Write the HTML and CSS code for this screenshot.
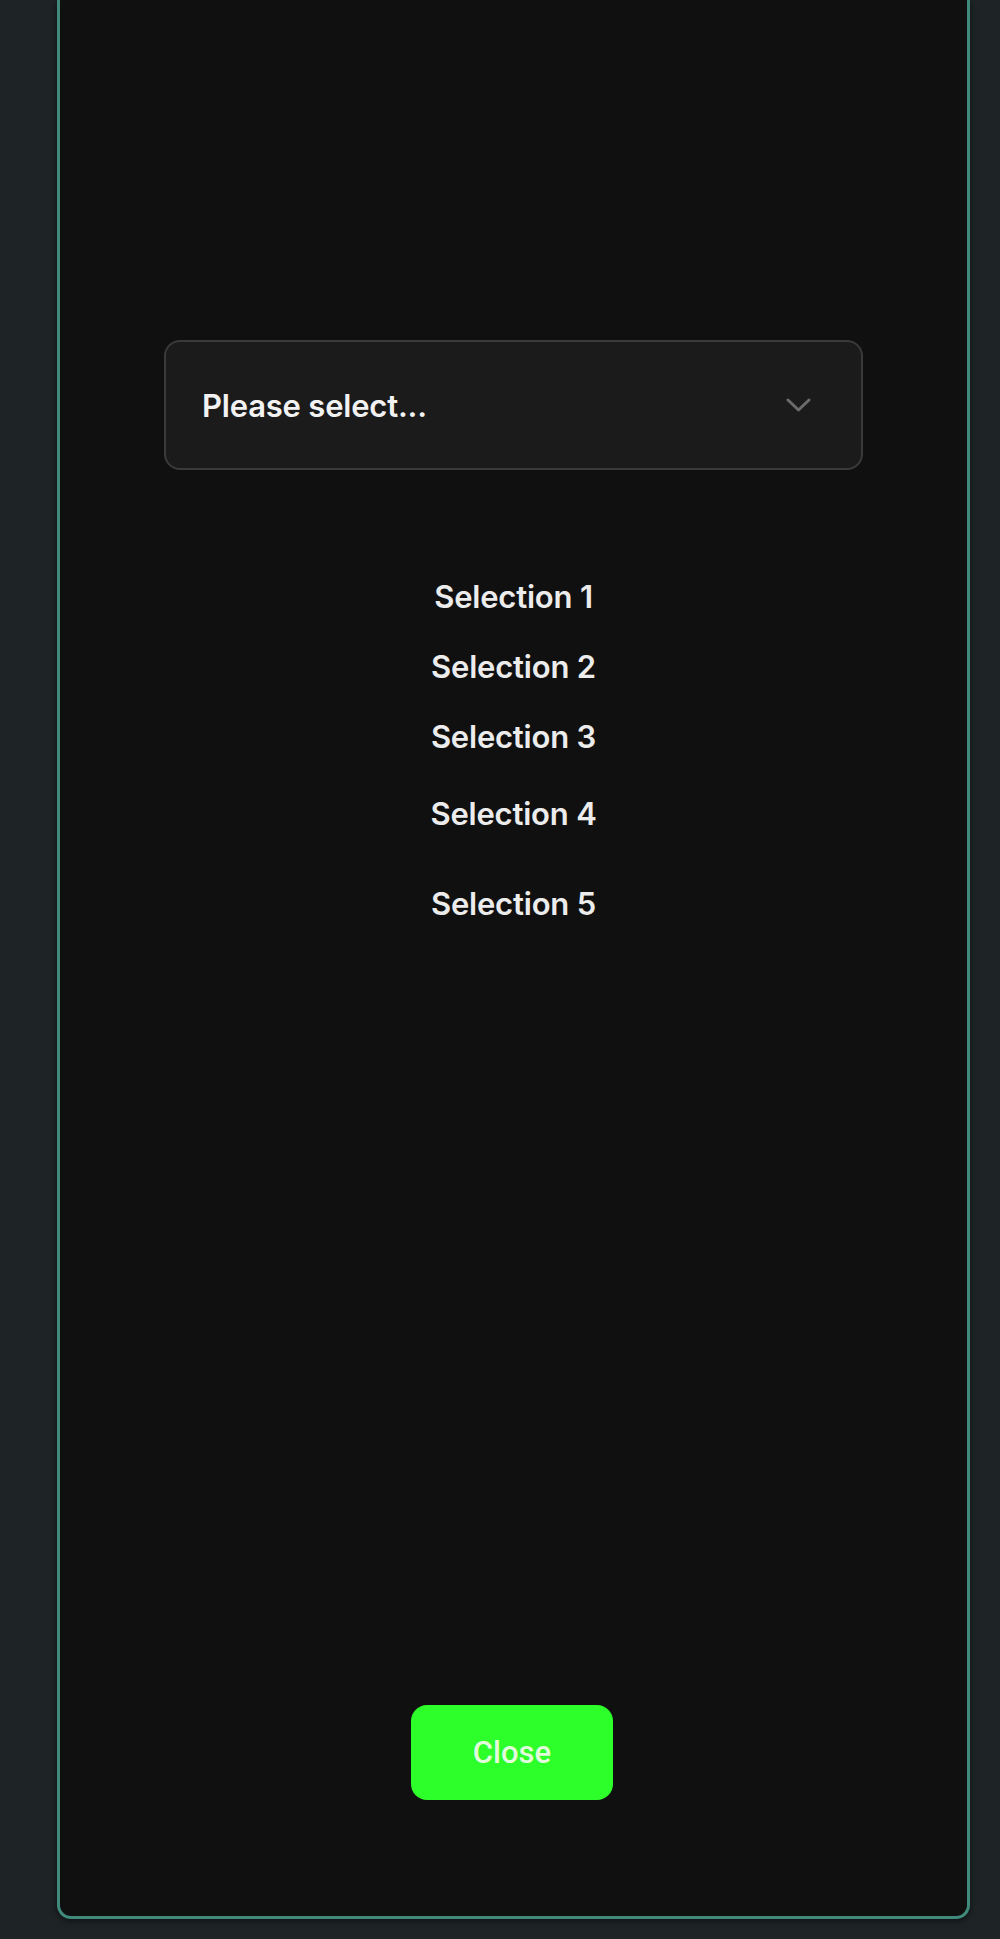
FILE: index.html
```html
<!DOCTYPE html>
<html lang="en">
<head>
    <meta charset="UTF-8">
    <meta name="viewport" content="width=device-width, initial-scale=1.0">
    <title>Select</title>
    <link rel="stylesheet" href="styles.css">
</head>
<body>
    <div class="modal">
        <div class="select-box">
            <span class="select-label">Please select...</span>
            <svg class="chevron" width="25" height="15" viewBox="0 0 25 15">
                <polyline points="2,2 12.5,12 23,2" fill="none" stroke="#6b6b6b" stroke-width="3" stroke-linecap="round" stroke-linejoin="round"/>
            </svg>
        </div>

        <ul class="options">
            <li>Selection 1</li>
            <li>Selection 2</li>
            <li>Selection 3</li>
            <li class="spaced">Selection 4</li>
            <li class="spaced-more">Selection 5</li>
        </ul>

        <button class="close-btn">Close</button>
    </div>
</body>
</html>
```

FILE: styles.css
```css
body {
    margin: 0;
    height: 1939px;
    background-color: #1e2326;
    font-family: Inter, "Noto Sans", sans-serif;
    padding: 0 30px 0 57px;
    box-sizing: border-box;
}
.modal {
    width: 913px;
    height: 1919px;
    box-sizing: border-box;
    background-color: #101010;
    border: 3px solid #3f8a7b;
    border-top: none;
    border-radius: 0 0 14px 14px;
    box-shadow: 0 2px 6px rgba(0, 0, 0, 0.5);
    display: flex;
    flex-direction: column;
    align-items: center;
    padding: 340px 0 116px;
}
.select-box {
    width: 699px;
    height: 130px;
    box-sizing: border-box;
    background-color: #1b1b1b;
    border: 2px solid #3a3a3a;
    border-radius: 16px;
    display: flex;
    align-items: center;
    justify-content: space-between;
    padding: 0 50px 0 36px;
}
.select-label {
    color: #f2f2f2;
    font-size: 31px;
    font-weight: 600;
    letter-spacing: -0.2px;
}
.chevron {
    display: block;
}
.options {
    list-style: none;
    margin: 108px 0 0;
    padding: 0;
    display: flex;
    flex-direction: column;
    align-items: center;
    gap: 33px;
    color: #ececec;
    font-size: 31px;
    font-weight: 600;
    letter-spacing: -0.2px;
    line-height: 37px;
}
.options .spaced {
    margin-top: 7px;
}
.options .spaced-more {
    margin-top: 20px;
}
.close-btn {
    margin: auto 3px 0 0;
    width: 202px;
    height: 95px;
    border: none;
    border-radius: 16px;
    background-color: #2dff2a;
    color: #e2fbdc;
    font-family: Roboto, "Liberation Sans", sans-serif;
    font-size: 31px;
    font-weight: 500;
    cursor: pointer;
}
```
